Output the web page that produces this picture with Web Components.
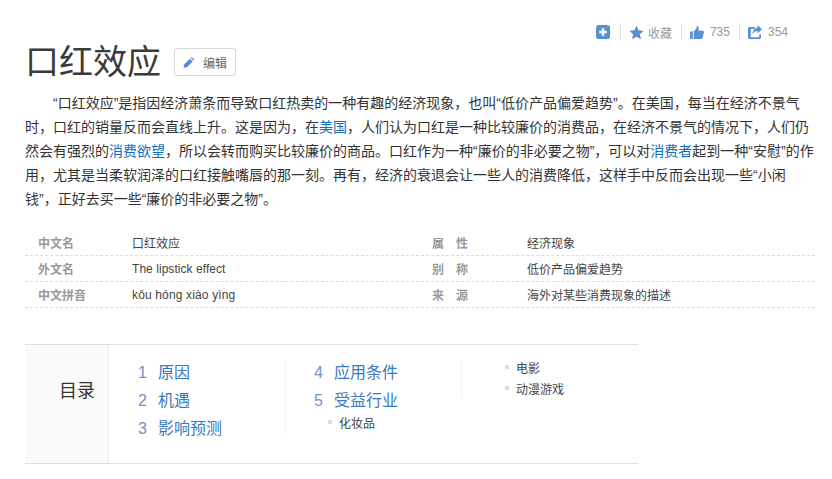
<!DOCTYPE html>
<html lang="zh">
<head>
<meta charset="utf-8">
<title>口红效应</title>
<style>
  html, body { margin: 0; background: #fff; }
  body { font-family: "Liberation Sans", "Noto Sans CJK SC", sans-serif; color: #333; }
  lemma-page { width: 790px; margin-left: 25px; }
</style>
</head>
<body>
<lemma-page>
  <tool-bar></tool-bar>
  <lemma-title>口红效应</lemma-title>
  <lemma-summary>“口红效应”是指因经济萧条而导致口红热卖的一种有趣的经济现象，也叫“低价产品偏爱趋势”。在美国，每当在经济不景气时，口红的销量反而会直线上升。这是因为，在<a href="#">美国</a>，人们认为口红是一种比较廉价的消费品，在经济不景气的情况下，人们仍然会有强烈的<a href="#">消费欲望</a>，所以会转而购买比较廉价的商品。口红作为一种“廉价的非必要之物”，可以对<a href="#">消费者</a>起到一种“安慰”的作用，尤其是当柔软润泽的口红接触嘴唇的那一刻。再有，经济的衰退会让一些人的消费降低，这样手中反而会出现一些“小闲钱”，正好去买一些“廉价的非必要之物”。</lemma-summary>
  <basic-info>
    <info-row a="中文名" b="口红效应" c="属　性" d="经济现象"></info-row>
    <info-row a="外文名" b="The lipstick effect" c="别　称" d="低价产品偏爱趋势" spacing=".05px"></info-row>
    <info-row a="中文拼音" b="kǒu hóng xiào yìng" c="来　源" d="海外对某些消费现象的描述" spacing=".15px"></info-row>
  </basic-info>
  <lemma-catalog>
    <catalog-col style="width:177px;height:73px;padding-left:29px;border-right:1px solid #f2f2f2">
      <catalog-item n="1">原因</catalog-item>
      <catalog-item n="2">机遇</catalog-item>
      <catalog-item n="3">影响预测</catalog-item>
    </catalog-col>
    <catalog-col style="width:175px;padding-left:28px">
      <catalog-item n="4">应用条件</catalog-item>
      <catalog-item n="5">受益行业</catalog-item>
      <catalog-sub style="margin-left:14px;margin-top:-1px">化妆品</catalog-sub>
    </catalog-col>
    <catalog-col style="height:38px;padding-left:43px;border-left:1px solid #f2f2f2">
      <catalog-sub>电影</catalog-sub>
      <catalog-sub style="margin-top:7px">动漫游戏</catalog-sub>
    </catalog-col>
  </lemma-catalog>
</lemma-page>

<script>
class LemmaPage extends HTMLElement {
  connectedCallback() {
    const shadow = this.attachShadow({ mode: "open" });
    shadow.innerHTML = `<style>:host { display: block; }</style><slot></slot>`;
  }
}

class ToolBar extends HTMLElement {
  connectedCallback() {
    const shadow = this.attachShadow({ mode: "open" });
    shadow.innerHTML = `
    <style>
      :host { display: flex; justify-content: flex-end; align-items: center; height: 16px; padding: 24px 27px 0 0; font-size: 12px; color: #999; }
      .item { display: flex; align-items: center; gap: 4px; }
      .wide { gap: 6px; }
      .stick { width: 1px; height: 16px; background: #e3e3e3; margin: 0 8px 0 9px; }
      .first { margin-left: 10px; }
      svg { display: block; fill: #5a8fd0; }
    </style>
    <div class="item">
      <svg width="14" height="14" viewBox="0 0 15 15"><rect width="15" height="15" rx="3"/><path d="M6.200 3.500h2.600v2.700h2.700v2.600H8.800v2.700H6.200V8.800H3.500V6.200h2.700z" fill="#fff"/></svg>
    </div>
    <div class="stick first"></div>
    <div class="item">
      <svg width="15" height="15" viewBox="0 0 15 15"><path d="M7.500.7l2.100 4.600 5 .6-3.700 3.400 1 5-4.400-2.500-4.400 2.500 1-5L.4 5.900l5-.6z"/></svg>
      <span>收藏</span>
    </div>
    <div class="stick"></div>
    <div class="item wide">
      <svg width="14" height="13" viewBox="0 0 15 14"><path d="M0 6h3v8H0zM4 6l3-3.500V.5C7 0 9.300-.2 9.300 2.500L9 5h4.500c1.300 0 1.700 1 1.400 2l-1.500 5.800c-.2.800-.8 1.200-1.600 1.200H4z"/></svg>
      <span>735</span>
    </div>
    <div class="stick"></div>
    <div class="item wide">
      <svg width="14" height="14" viewBox="0 0 14 14"><path d="M1.500 2H7v1.800H2.800v8.400h8.400V9.500H13v3c0 .8-.7 1.500-1.500 1.500h-10C.7 14 0 13.300 0 12.500v-9C0 2.700.7 2 1.500 2z"/><path d="M9.500 0L14 4.300 9.500 8.500V6C7 6 5.500 7 4.500 9.500 4.500 5.500 6.500 3 9.500 2.700z"/></svg>
      <span>354</span>
    </div>`;
  }
}

class LemmaTitle extends HTMLElement {
  connectedCallback() {
    const shadow = this.attachShadow({ mode: "open" });
    shadow.innerHTML = `
    <style>
      :host { display: flex; align-items: center; height: 44px; }
      h1 { margin: 0; font-size: 34px; font-weight: 400; line-height: 44px; color: #3a3a3a; }
      button { display: flex; align-items: center; gap: 8px; height: 28px; width: 62px; margin-left: 13px; padding: 0 0 0 8px; box-sizing: border-box; border: 1px solid #d8d8d8; border-radius: 3px; background: #fff; font: inherit; font-size: 12px; color: #666; }
      svg { display: block; }
    </style>
    <h1><slot></slot></h1>
    <button>
      <svg width="12" height="11" viewBox="0 0 12 12"><path d="M0 12l.8-4L7 2l3 3-6 6z" fill="#5a8fd0"/><path d="M8 1l1-1 3 3-1 1z" fill="#5a8fd0"/></svg>
      <span>编辑</span>
    </button>`;
  }
}

class LemmaSummary extends HTMLElement {
  connectedCallback() {
    const shadow = this.attachShadow({ mode: "open" });
    shadow.innerHTML = `
    <style>
      :host { display: block; margin-top: 7px; font-size: 14px; line-height: 24px; color: #333; text-indent: 28px; }
      ::slotted(a) { color: #136ec2; text-decoration: none; }
    </style>
    <slot></slot>`;
  }
}

class BasicInfo extends HTMLElement {
  connectedCallback() {
    const shadow = this.attachShadow({ mode: "open" });
    shadow.innerHTML = `<style>:host { display: block; margin-top: 19px; }</style><slot></slot>`;
  }
}

class InfoRow extends HTMLElement {
  connectedCallback() {
    const shadow = this.attachShadow({ mode: "open" });
    const t = (k) => this.getAttribute(k);
    shadow.innerHTML = `
    <style>
      :host { display: grid; grid-template-columns: 107px 300px 95px 1fr; height: 26px; align-items: center; box-sizing: border-box; border-bottom: 1px dashed #ddd; font-size: 12px; color: #444; }
      .k { font-weight: 700; color: #999; }
      .first { padding-left: 13px; }
      .val { letter-spacing: ${t("spacing") || "0"}; }
    </style>
    <div class="k first">${t("a")}</div><div class="val">${t("b")}</div><div class="k">${t("c")}</div><div>${t("d")}</div>`;
  }
}

class LemmaCatalog extends HTMLElement {
  connectedCallback() {
    const shadow = this.attachShadow({ mode: "open" });
    shadow.innerHTML = `
    <style>
      :host { display: flex; width: 613px; height: 120px; margin-top: 36px; box-sizing: border-box; border-top: 1px solid #e0e0e0; border-bottom: 1px solid #e0e0e0; }
      .side { width: 84px; padding: 33px 13px 0 0; box-sizing: border-box; text-align: right; background: #fafafa; border-right: 1px solid #eee; font-size: 18px; line-height: 26px; color: #333; }
      .cols { display: flex; align-items: flex-start; padding-top: 15px; }
    </style>
    <div class="side">目录</div>
    <div class="cols"><slot></slot></div>`;
  }
}

class CatalogCol extends HTMLElement {
  connectedCallback() {
    const shadow = this.attachShadow({ mode: "open" });
    shadow.innerHTML = `
    <style>
      :host { display: block; box-sizing: border-box; }
    </style>
    <slot></slot>`;
  }
}

class CatalogItem extends HTMLElement {
  connectedCallback() {
    const shadow = this.attachShadow({ mode: "open" });
    shadow.innerHTML = `
    <style>
      :host { display: flex; height: 28px; line-height: 26px; font-size: 16px; color: #3a78bf; }
      .n { width: 20px; color: #7192c6; }
    </style>
    <span class="n">${this.getAttribute("n")}</span><slot></slot>`;
  }
}

class CatalogSub extends HTMLElement {
  connectedCallback() {
    const shadow = this.attachShadow({ mode: "open" });
    shadow.innerHTML = `
    <style>
      :host { display: flex; align-items: center; height: 14px; font-size: 12px; color: #444; }
      i { width: 4px; height: 4px; background: #ddd; margin-right: 7px; }
    </style>
    <i></i><slot></slot>`;
  }
}

customElements.define("lemma-page", LemmaPage);
customElements.define("tool-bar", ToolBar);
customElements.define("lemma-title", LemmaTitle);
customElements.define("lemma-summary", LemmaSummary);
customElements.define("basic-info", BasicInfo);
customElements.define("info-row", InfoRow);
customElements.define("lemma-catalog", LemmaCatalog);
customElements.define("catalog-col", CatalogCol);
customElements.define("catalog-item", CatalogItem);
customElements.define("catalog-sub", CatalogSub);
</script>
</body>
</html>
